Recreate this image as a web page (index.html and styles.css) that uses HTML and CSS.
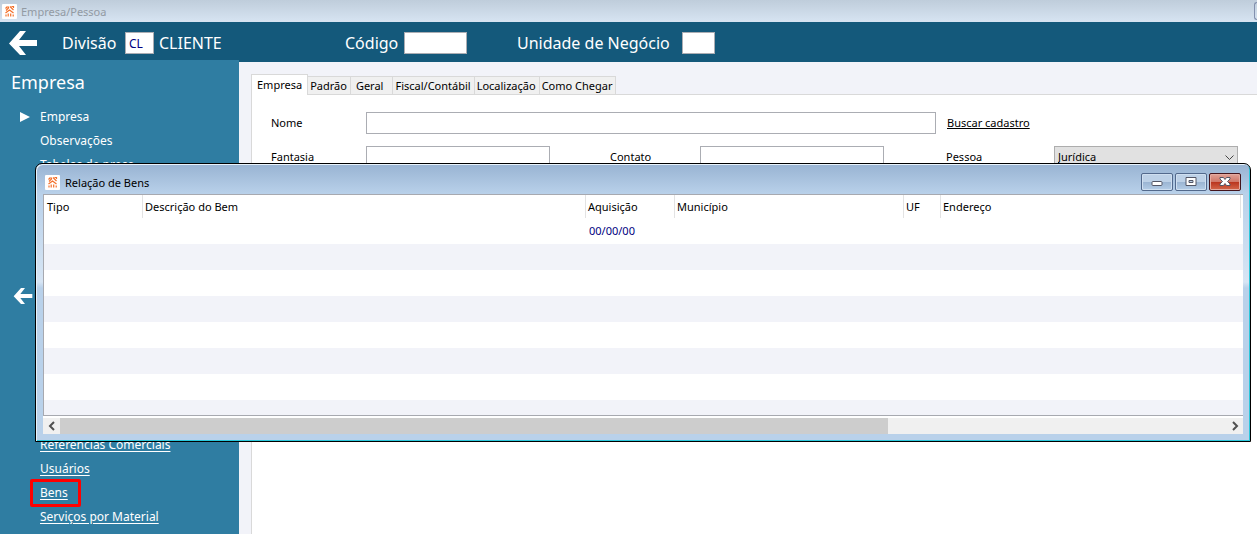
FILE: index.html
```html
<!DOCTYPE html>
<html lang="pt-BR">
<head>
  <meta charset="UTF-8" />
  <meta name="viewport" content="width=device-width, initial-scale=1.0"/>
  <title>Empresa/Pessoa</title>
  <link rel="stylesheet" href="styles.css">
</head>
<body>
  <svg class="symbols" width="0" height="0" aria-hidden="true">
    <symbol id="logo" viewBox="0 0 15 15">
      <rect width="15" height="15" rx="1" fill="#fff"/>
      <path d="M3.500 4.500l2-2M4 6.500l2.500-2.500V2.500M8 2.500l3.500 3.500M9.500 2.500h2v1.500M3.500 9l4-3 4 3M4 12.500V10.500M6.200 12.500V9.500M8.700 12.500V9.500M11.200 12.500V10.500" fill="none" stroke="#f4702a" stroke-width="1.200"/>
    </symbol>
    <symbol id="back" viewBox="0 0 28 24">
      <path d="M11 0h6L10 9h18v6H10l7 9h-6L0 12.500z" fill="#fff"/>
    </symbol>
  </svg>

  <div class="titlebar">
    <svg class="logo"><use href="#logo"/></svg>
    <span>Empresa/Pessoa</span>
    <button class="edge-btn" aria-label="Minimizar"></button>
  </div>

  <header class="header">
    <button class="back-btn" aria-label="Voltar"><svg><use href="#back"/></svg></button>
    <label for="divisao">Divisão</label>
    <input id="divisao" class="short" type="text" value="CL">
    <span class="client">CLIENTE</span>
    <label for="codigo">Código</label>
    <input id="codigo" class="code" type="text">
    <label for="unidade" class="unit-label">Unidade de Negócio</label>
    <input id="unidade" class="unit" type="text">
  </header>

  <div class="layout">
    <nav class="sidebar">
      <h1>Empresa</h1>
      <ul class="menu">
        <li class="current"><a href="#">Empresa</a></li>
        <li><a href="#">Observações</a></li>
        <li><a href="#">Tabelas de preço</a></li>
      </ul>
      <button class="back-btn small" aria-label="Recolher menu"><svg><use href="#back"/></svg></button>
      <ul class="menu links">
        <li><a href="#">Referências Comerciais</a></li>
        <li><a href="#">Usuários</a></li>
        <li class="marked"><a href="#">Bens</a></li>
        <li><a href="#">Serviços por Material</a></li>
      </ul>
    </nav>

    <main class="content">
      <div class="tabs" role="tablist">
        <button class="tab active" role="tab" aria-selected="true">Empresa</button>
        <button class="tab" role="tab">Padrão</button>
        <button class="tab wide" role="tab">Geral</button>
        <button class="tab" role="tab">Fiscal/Contábil</button>
        <button class="tab" role="tab">Localização</button>
        <button class="tab" role="tab">Como Chegar</button>
      </div>
      <form class="panel">
        <label for="nome">Nome</label>
        <input id="nome" class="full" type="text">
        <a href="#" class="search">Buscar cadastro</a>
        <label for="fantasia">Fantasia</label>
        <input id="fantasia" type="text">
        <label for="contato" class="contact-label">Contato</label>
        <input id="contato" type="text">
        <label for="pessoa" class="person-label">Pessoa</label>
        <div class="select">
          <select id="pessoa"><option>Jurídica</option></select>
          <svg viewBox="0 0 9 5"><path d="M.5.5l4 4 4-4" fill="none" stroke="#444"/></svg>
        </div>
      </form>
    </main>
  </div>

  <section class="window">
    <div class="window-bar">
      <svg class="logo"><use href="#logo"/></svg>
      <h2>Relação de Bens</h2>
      <button class="win-btn" aria-label="Minimizar">
        <svg viewBox="0 0 12 10"><rect x="1" y="4.500" width="10" height="4" rx="1" fill="#fff" stroke="#535666"/></svg>
      </button>
      <button class="win-btn" aria-label="Maximizar">
        <svg viewBox="0 0 12 10"><path d="M1 .5h10v8H1zM4 3.500v2h4v-2z" fill="#fff" fill-rule="evenodd" stroke="#535666"/></svg>
      </button>
      <button class="win-btn close" aria-label="Fechar">
        <svg viewBox="0 0 12 10"><path d="M1 .5h3.500L6 2.500 7.500.5H11v1.500L8.500 4.500 11 7v1.500H7.500L6 6.500 4.500 8.500H1V7l2.500-2.500L1 2z" fill="#fff" stroke="#535666"/></svg>
      </button>
    </div>
    <div class="window-body">
      <div class="grid-area">
        <table>
          <colgroup>
            <col class="c-type"><col><col class="c-date"><col class="c-city"><col class="c-uf"><col class="c-address"><col class="c-rest">
          </colgroup>
          <thead>
            <tr><th>Tipo</th><th>Descrição do Bem</th><th>Aquisição</th><th>Município</th><th>UF</th><th>Endereço</th><th></th></tr>
          </thead>
          <tbody>
            <tr><td></td><td></td><td>00/00/00</td><td></td><td></td><td></td><td></td></tr>
            <tr><td colspan="7"></td></tr>
            <tr><td colspan="7"></td></tr>
            <tr><td colspan="7"></td></tr>
            <tr><td colspan="7"></td></tr>
            <tr><td colspan="7"></td></tr>
            <tr><td colspan="7"></td></tr>
            <tr class="last"><td colspan="7"></td></tr>
          </tbody>
        </table>
      </div>
      <div class="scrollbar">
        <button aria-label="Rolar para a esquerda"><svg viewBox="0 0 6 8"><path d="M5 0L1 4l4 4" fill="none" stroke="#505050" stroke-width="2"/></svg></button>
        <div class="track"><div class="thumb"></div></div>
        <button aria-label="Rolar para a direita"><svg viewBox="0 0 6 8"><path d="M1 0l4 4-4 4" fill="none" stroke="#505050" stroke-width="2"/></svg></button>
      </div>
    </div>
  </section>
</body>
</html>
```
FILE: styles.css
```css
* {
  box-sizing: border-box;
}

body {
  margin: 0;
  min-height: 100vh;
  display: flex;
  flex-direction: column;
  font-family: Tahoma, 'Noto Sans', sans-serif;
  font-size: 11px;
  color: #000;
  background: #f2f3f9;
}

button, input, select {
  font: inherit;
  margin: 0;
  border-radius: 0;
}

button {
  padding: 0;
  border: none;
  background: none;
}

input {
  border: 1px solid #abadb3;
  background: #fff;
  min-width: 0;
}

.symbols {
  position: absolute;
}

.logo {
  width: 15px;
  height: 15px;
  flex: none;
}

/* Main window title */
.titlebar {
  display: flex;
  align-items: center;
  gap: 4px;
  height: 22px;
  padding-left: 2px;
  color: #929aa3;
  background: linear-gradient(#bfcddb, #d7e4f2);
}

.edge-btn {
  width: 3px;
  height: 18px;
  margin-left: auto;
  border: 1px solid #8390ae;
  border-right: none;
  border-radius: 3px 0 0 3px;
}

/* Blue header */
.header {
  display: flex;
  align-items: center;
  height: 40px;
  padding: 2px 9px 0;
  font-size: 16px;
  color: #fff;
  background: #14597b;
}

.header input {
  height: 22px;
  padding: 0 3px;
  font-size: 12px;
  color: #000080;
}

.back-btn svg {
  display: block;
  width: 28px;
  height: 24px;
}

.header label {
  width: 63px;
  margin-left: 25px;
}

.header .short {
  width: 29px;
}

.client {
  width: 166px;
  padding-left: 5px;
}

.header .client + label {
  width: 59px;
}

.header .code {
  width: 63px;
}

.header .unit-label {
  width: 165px;
  margin-left: 50px;
}

.header .unit {
  width: 33px;
}

.layout {
  display: flex;
  flex: 1;
}

/* Sidebar */
.sidebar {
  width: 239px;
  flex: none;
  margin-top: -2px;
  padding: 7px 0 4px;
  color: #fff;
  background: #2f7da2;
}

.sidebar h1 {
  margin: 0 0 8px 11px;
  font-size: 18px;
  font-weight: normal;
  line-height: 30px;
}

.menu {
  margin: 0;
  padding: 0;
  list-style: none;
  font-size: 12px;
  line-height: 24px;
}

.menu li {
  display: flex;
  padding-left: 40px;
}

.menu a {
  color: #fff;
  text-decoration: none;
}

.menu .current {
  align-items: center;
  gap: 10px;
  padding-left: 20px;
}

.menu .current::before {
  content: "";
  border: 5px solid transparent;
  border-left: 10px solid #fff;
  border-right: none;
}

.links {
  margin-top: 129px;
}

.links a {
  text-decoration: underline;
  text-underline-offset: 2px;
}

.menu .marked {
  width: 51px;
  margin: -2px 0 -2px 30px;
  padding: 0 0 0 7px;
  height: 28px;
  border: 3px solid #f00;
  border-radius: 2px;
  line-height: 22px;
}

.back-btn.small {
  display: block;
  margin: 111px 0 0 13px;
}

.back-btn.small svg {
  width: 20px;
  height: 16px;
}

/* Tabs and form */
.content {
  flex: 1;
  min-width: 0;
  display: flex;
  flex-direction: column;
  padding: 12px 0 0 12px;
}

.tabs {
  display: flex;
  align-items: flex-end;
}

.tab {
  height: 18px;
  padding: 0 3px 0 2px;
  border: 1px solid #d9d9d9;
  border-left: none;
  border-bottom: none;
  background: #f0f0f0;
}

.tab.wide {
  padding: 0 9px 0 5px;
}

.tab.active {
  height: 21px;
  margin-bottom: -1px;
  padding: 0 5px 2px;
  border-left: 1px solid #d9d9d9;
  background: #fff;
  z-index: 1;
}

.panel {
  flex: 1;
  display: grid;
  grid-template-columns: 95px 1fr 150px 1fr 52px 118px 1fr;
  grid-auto-rows: 22px;
  row-gap: 12px;
  align-content: start;
  align-items: center;
  padding: 17px 19px 0;
  border: 1px solid #d9d9d9;
  border-right: none;
  border-bottom: none;
  background: #fff;
}

.panel label, .search {
  padding-bottom: 2px;
}

.panel input {
  width: 100%;
  height: 22px;
}

.panel .full {
  grid-column: 2 / 6;
}

.search {
  grid-column: 6 / 8;
  padding-left: 11px;
  color: #000;
}

.contact-label {
  padding-left: 60px;
}

.person-label {
  grid-column: 5 / 7;
  padding-left: 62px;
}

.select {
  display: grid;
  align-items: center;
}

.select select {
  grid-area: 1 / 1;
  width: 100%;
  height: 22px;
  padding: 0 3px 2px;
  border: 1px solid #adadad;
  background: #e1e1e1;
  appearance: none;
}

.select svg {
  grid-area: 1 / 1;
  justify-self: end;
  width: 9px;
  height: 5px;
  margin-right: 4px;
  pointer-events: none;
}

/* Floating window */
.window {
  position: absolute;
  top: 163px;
  left: 35px;
  right: 6px;
  padding: 0 7px 7px;
  border: 1px solid #000;
  border-radius: 7px 7px 0 0;
  background: linear-gradient(#98b3d2, #b9d1ea 30px, #d7e5f4 118px, #b9d1ea 124px);
  box-shadow: inset 1px 1px #e8f3fc, inset -1px -1px #2bc8dc;
}

.window-bar {
  display: flex;
  align-items: center;
  gap: 2px;
  height: 30px;
  padding: 6px 2px 0;
}

.window-bar h2 {
  flex: 1;
  margin: 0 0 0 3px;
  font-size: 11px;
  font-weight: normal;
}

.win-btn {
  display: flex;
  align-items: center;
  justify-content: center;
  width: 32px;
  height: 18px;
  border: 1px solid #52698c;
  border-radius: 2px;
  background: linear-gradient(#bdd1e7 50%, #9ab4d2 50%, #b4cde7);
  box-shadow: inset 0 0 0 1px #cfdff0;
}

.win-btn svg {
  width: 12px;
  height: 10px;
}

.win-btn.close {
  border-color: #43141c;
  background: linear-gradient(#e0a297, #cf7566 50%, #b9331d 50%, #d4674b);
  box-shadow: inset 0 0 0 1px #e4aaa0;
}

.window-body {
  background: #fff;
}

.grid-area {
  border: 1px solid #a7a9b0;
  border-right: none;
}

table {
  width: 100%;
  table-layout: fixed;
  border-collapse: collapse;
}

.c-type { width: 99px; }
.c-date { width: 89px; }
.c-city { width: 229px; }
.c-uf { width: 37px; }
.c-address { width: 300px; }
.c-rest { width: 2px; }

th {
  height: 23px;
  padding: 0 2px;
  font-weight: normal;
  text-align: left;
  background: linear-gradient(#e3e3e3, #e3e3e3) right / 1px 100% no-repeat;
}

th:first-child, td:nth-child(3) {
  padding-left: 3px;
}

th:last-child {
  padding: 0;
  background: none;
}

td {
  height: 26px;
  padding: 0 0 2px;
  color: #000080;
}

tbody tr:nth-child(even) {
  background: #f2f3f9;
}

.last td {
  height: 15px;
}

.scrollbar {
  display: flex;
  height: 18px;
  border-top: 2px solid #fff;
  background: #f0f0f0;
}

.scrollbar button {
  display: flex;
  align-items: center;
  justify-content: center;
  width: 17px;
}

.scrollbar svg {
  width: 6px;
  height: 8px;
  overflow: visible;
}

.track {
  flex: 1;
}

.thumb {
  width: 71%;
  height: 100%;
  background: #cdcdcd;
}
```
